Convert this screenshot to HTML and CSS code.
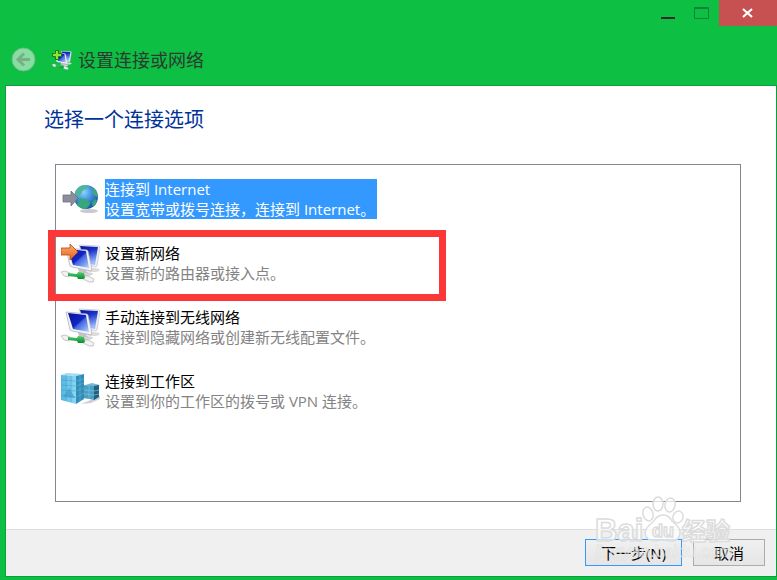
FILE: index.html
```html
<!DOCTYPE html>
<html lang="zh-CN">

<head>
    <meta charset="utf-8">
    <title>设置连接或网络</title>
    <link rel="stylesheet" href="styles.css">
</head>

<body>
    <!-- shared icon parts -->
    <svg class="defs" width="0" height="0" aria-hidden="true">
        <defs>
            <linearGradient id="screen" x1="0.1" y1="0" x2="1" y2="0.9">
                <stop offset="0" stop-color="#0713a0"/>
                <stop offset="0.5" stop-color="#1128c4"/>
                <stop offset="0.56" stop-color="#3f62df"/>
                <stop offset="1" stop-color="#a9c8ff"/>
            </linearGradient>
            <linearGradient id="screen-back" x1="0" y1="0" x2="0.3" y2="1">
                <stop offset="0" stop-color="#0713a0"/>
                <stop offset="0.4" stop-color="#1a35c8"/>
                <stop offset="1" stop-color="#9dbcfa"/>
            </linearGradient>
            <linearGradient id="cable" x1="0" y1="0" x2="0" y2="1">
                <stop offset="0" stop-color="#4fd06c"/>
                <stop offset="1" stop-color="#0c8a34"/>
            </linearGradient>
            <linearGradient id="orange" x1="0" y1="0" x2="0" y2="1">
                <stop offset="0" stop-color="#ffac70"/>
                <stop offset="1" stop-color="#e5601c"/>
            </linearGradient>
            <radialGradient id="sea" cx="0.4" cy="0.3" r="0.7">
                <stop offset="0" stop-color="#8fd2ff"/>
                <stop offset="0.5" stop-color="#3f92dd"/>
                <stop offset="1" stop-color="#1b559f"/>
            </radialGradient>
            <linearGradient id="tower" x1="0" y1="0" x2="1" y2="0">
                <stop offset="0" stop-color="#58b5e0"/>
                <stop offset="1" stop-color="#8ad8f4"/>
            </linearGradient>
            <g id="computers">
                <ellipse cx="32" cy="27" rx="7" ry="2" fill="#dcdcdf"/>
                <ellipse cx="24" cy="31" rx="8" ry="2" fill="#d5d5d8"/>
                <path d="M18 2l20 1 1 1-3 19-1 1-10-2z" fill="#f0f0f2" stroke="#b9bbc2" stroke-width="0.6"/>
                <path d="M19 3l18 1-3 18-9-2z" fill="url(#screen-back)"/>
                <path d="M17 25l7 1 3 4-9 0z" fill="#c3c5ca"/>
                <path d="M5 5l21 2 1 1 4 18-1 2-19-4-2-1z" fill="#f4f4f6" stroke="#a9abb2" stroke-width="0.7"/>
                <path d="M7 6l18 2 3 17-16-3z" fill="url(#screen)"/>
                <path d="M0 29l4-1 5 2-1 4-5-1z" fill="#f2f2f0" stroke="#a3a8a3" stroke-width="0.6"/>
                <path d="M22 33l5 0 6 3-1 3-4 0-6-3z" fill="#f2f2f0" stroke="#a3a8a3" stroke-width="0.6"/>
                <path d="M7 30l9 1 1-2 6 1 1 5-2 1-5 0-1-2-9-1z" fill="url(#cable)"/>
            </g>
        </defs>
    </svg>

    <header>
        <div class="window-controls">
            <button type="button" class="control" aria-label="最小化">
                <svg width="16" height="14" viewBox="0 0 16 14"><path d="M1 11h14v2H1z" fill="#2b2b2b"/></svg>
            </button>
            <button type="button" class="control" aria-label="最大化" disabled>
                <svg width="16" height="14" viewBox="0 0 16 14"><path d="M.5 1.500h14v11h-14zM0 2.500h15" fill="none" stroke="#16813a"/></svg>
            </button>
            <button type="button" class="control close" aria-label="关闭">
                <svg width="12" height="10" viewBox="0 0 12 10"><path d="M1 1l9 8M10 1l-9 8" stroke="#fff" stroke-width="2.200"/></svg>
            </button>
        </div>
        <div class="title-row">
            <button type="button" class="back" aria-label="后退" disabled>
                <svg width="25" height="25" viewBox="0 0 25 25">
                    <circle cx="12.500" cy="12.500" r="11.500" fill="#86dfa1" stroke="#75b58a"/>
                    <path d="M19 12.500H7.500M13 6.500l-6 6 6 6" fill="none" stroke="#7bad8b" stroke-width="3"/>
                </svg>
            </button>
            <svg class="title-icon" width="20" height="20" viewBox="0 0 40 40">
                <use href="#computers"/>
                <path d="M7 1h6v6h6v6h-6v6H7v-6H1V7h6z" fill="#8be82c" stroke="#177f13" stroke-width="2"/>
            </svg>
            <span class="title">设置连接或网络</span>
        </div>
    </header>

    <div class="panel">
        <main>
            <h1>选择一个连接选项</h1>
            <ul class="options">
                <li>
                    <button type="button" class="option selected">
                        <svg width="40" height="40" viewBox="0 0 40 40">
                            <ellipse cx="28" cy="32" rx="9" ry="2" fill="#c9c9cf"/>
                            <circle cx="25" cy="18" r="12" fill="url(#sea)"/>
                            <path d="M19 7q6-2 8 0l-2 3-3 1-2 4-3 2-3-1q0-5 5-9z" fill="#50b69a"/>
                            <path d="M30 8q6 3 7 10l-3-1-3-4 1-2z" fill="#43a876"/>
                            <path d="M19 19l6 1 4 4-1 3-3 3q-6 0-9-4z" fill="#36a77c"/>
                            <path d="M34 20l2 2q-1 4-4 6l-1-4z" fill="#36a77c"/>
                            <path d="M2 16h8v-4l7 7-7 8v-4H2z" fill="#8d8e9c" stroke="#6f7080" stroke-width="0.8"/>
                        </svg>
                        <span class="text">
                            <span class="name">连接到 Internet</span>
                            <span class="desc">设置宽带或拨号连接，连接到 Internet。</span>
                        </span>
                    </button>
                </li>
                <li class="marked">
                    <button type="button" class="option">
                        <svg width="40" height="40" viewBox="0 0 40 40">
                            <use href="#computers"/>
                            <path d="M0 5h9V1l8 8-8 8v-5H0z" fill="url(#orange)" stroke="#b54a16" stroke-width="0.8"/>
                        </svg>
                        <span class="text">
                            <span class="name">设置新网络</span>
                            <span class="desc">设置新的路由器或接入点。</span>
                        </span>
                    </button>
                </li>
                <li>
                    <button type="button" class="option">
                        <svg width="40" height="40" viewBox="0 0 40 40">
                            <use href="#computers"/>
                        </svg>
                        <span class="text">
                            <span class="name">手动连接到无线网络</span>
                            <span class="desc">连接到隐藏网络或创建新无线配置文件。</span>
                        </span>
                    </button>
                </li>
                <li>
                    <button type="button" class="option">
                        <svg width="40" height="40" viewBox="0 0 40 40">
                            <path d="M20 33l10-1 9-4v-3z" fill="#cfcfd3"/>
                            <path d="M24 14l7-2 8 2-5 2z" fill="#78b9d4"/>
                            <path d="M22 14l12 1v14l-12-2z" fill="#4a9fc4"/>
                            <path d="M33 15l5-1v12l-5 3z" fill="#215f80"/>
                            <path d="M23 19l10 1 5-1M23 23l10 1 5-1M28 15v13" fill="none" stroke="#86cbe4" stroke-width="0.6"/>
                            <path d="M0 4l6-2 16 1-7 2z" fill="#a3dcf1"/>
                            <path d="M0 4l15 1v28L0 29z" fill="url(#tower)"/>
                            <path d="M15 5l8-2v25l-8 5z" fill="#318db8"/>
                            <path d="M0 9l15 1M0 14l15 1M0 19l15 1M0 24l15 2M5 4v26M10 5v26" stroke="#2f8fbd" stroke-width="0.4"/>
                            <path d="M15 10l8-2M15 15l8-3M15 20l8-3M15 26l8-4M19 4v26" stroke="#69b9d8" stroke-width="0.5"/>
                            <path d="M2 26l6-9 6 10z" fill="#3c9dca" opacity="0.7"/>
                        </svg>
                        <span class="text">
                            <span class="name">连接到工作区</span>
                            <span class="desc">设置到你的工作区的拨号或 VPN 连接。</span>
                        </span>
                    </button>
                </li>
            </ul>
        </main>

        <footer>
            <button type="button" class="button default">下一步(N)</button>
            <button type="button" class="button">取消</button>
            <svg class="watermark" width="140" height="72" viewBox="0 0 140 72" aria-hidden="true">
                <g fill="#fff" fill-opacity="0.7" stroke="#dcdcdc" stroke-width="1.500">
                    <text class="mark-latin" x="0" y="45" font-size="31">Bai</text>
                    <ellipse cx="53" cy="18" rx="5" ry="7" transform="rotate(-15 53 18)"/>
                    <ellipse cx="63" cy="8" rx="5" ry="7"/>
                    <ellipse cx="75" cy="9" rx="5" ry="7" transform="rotate(10 75 9)"/>
                    <ellipse cx="83" cy="21" rx="5" ry="6" transform="rotate(20 83 21)"/>
                    <path d="M68 19q6 0 9 6 9 7 8 13-2 8-10 7-7-2-15 0-9 0-10-8 1-6 8-11 4-7 10-7z"/>
                    <text class="mark-latin" x="57" y="41" font-size="18">du</text>
                    <text class="mark-cjk" x="87" y="44" font-size="24">经验</text>
                </g>
                <text class="mark-url" x="1" y="61" font-size="17">jingyan.baidu.com</text>
            </svg>
        </footer>
    </div>
</body>

</html>
```
FILE: styles.css
```css
*,
*::after {
    box-sizing: border-box;
}

body {
    display: flex;
    flex-direction: column;
    height: 100vh;
    min-height: 520px;
    margin: 0;
    padding: 0 0 3px 5px;
    background: #0dbf43;
    color: #000;
    font-family: "Open Sans", "Noto Sans CJK SC", sans-serif;
    font-size: 15px;
    line-height: 20px;
}

button {
    padding: 0;
    border: 0;
    background: none;
    color: inherit;
    font: inherit;
}

svg {
    display: block;
    flex: none;
}

.defs {
    position: absolute;
}

/* title bar */
.window-controls {
    display: flex;
    justify-content: flex-end;
    height: 26px;
}

.control {
    display: flex;
    align-items: center;
    justify-content: center;
    width: 34px;
}

.close {
    width: 58px;
    background: #c75050;
}

.title-row {
    display: flex;
    align-items: center;
    height: 59px;
    padding: 8px 6px 0;
}

.title-icon {
    margin: 0 6px 0 16px;
}

.title {
    color: #2b3a30;
    font-size: 18px;
    line-height: 24px;
}

/* content */
.panel {
    display: flex;
    flex: 1;
    flex-direction: column;
    border: 1px solid #0a9f37;
    background: #fff;
}

main {
    display: flex;
    flex: 1;
    flex-direction: column;
    padding: 20px 35px 27px 38px;
}

h1 {
    margin: 0 0 30px;
    color: #003399;
    font-size: 20px;
    font-weight: normal;
    line-height: 28px;
}

.options {
    display: flex;
    flex: 1;
    flex-direction: column;
    gap: 24px;
    margin: 0 0 0 11px;
    padding: 14px 5px;
    border: 1px solid #828790;
    list-style: none;
}

.option {
    display: flex;
    gap: 4px;
    text-align: left;
}

.text {
    padding-right: 2px;
}

.name,
.desc {
    display: block;
}

.desc {
    color: #838383;
}

.selected .text {
    background: #3399ff;
    color: #fff;
}

.selected .desc {
    color: #fff;
}

/* red frame around the option to pick */
.marked {
    position: relative;
}

.marked::after {
    content: "";
    position: absolute;
    top: -13px;
    left: -13px;
    width: 398px;
    height: 71px;
    border: 7px solid #fc3737;
    pointer-events: none;
}

/* bottom bar */
footer {
    position: relative;
    display: flex;
    justify-content: flex-end;
    gap: 11px;
    padding: 9px 11px 10px;
    border-top: 1px solid #dfdfdf;
    background: #f0f0f0;
}

.button {
    width: 72px;
    height: 27px;
    border: 1px solid #acacac;
    background: linear-gradient(#f0f0f0, #e5e5e5);
}

.default {
    width: 97px;
    border-color: #3399ff;
}

.watermark {
    position: absolute;
    right: 41px;
    bottom: 8px;
    pointer-events: none;
}

.mark-latin {
    font-family: "Liberation Sans", sans-serif;
    font-weight: bold;
}

.mark-cjk {
    font-family: "Noto Sans CJK SC", sans-serif;
    font-weight: bold;
}

.mark-url {
    fill: #fff;
    fill-opacity: 0.6;
    stroke: #d0d0d0;
    stroke-opacity: 0.4;
    font-family: "Liberation Sans", sans-serif;
}
```
